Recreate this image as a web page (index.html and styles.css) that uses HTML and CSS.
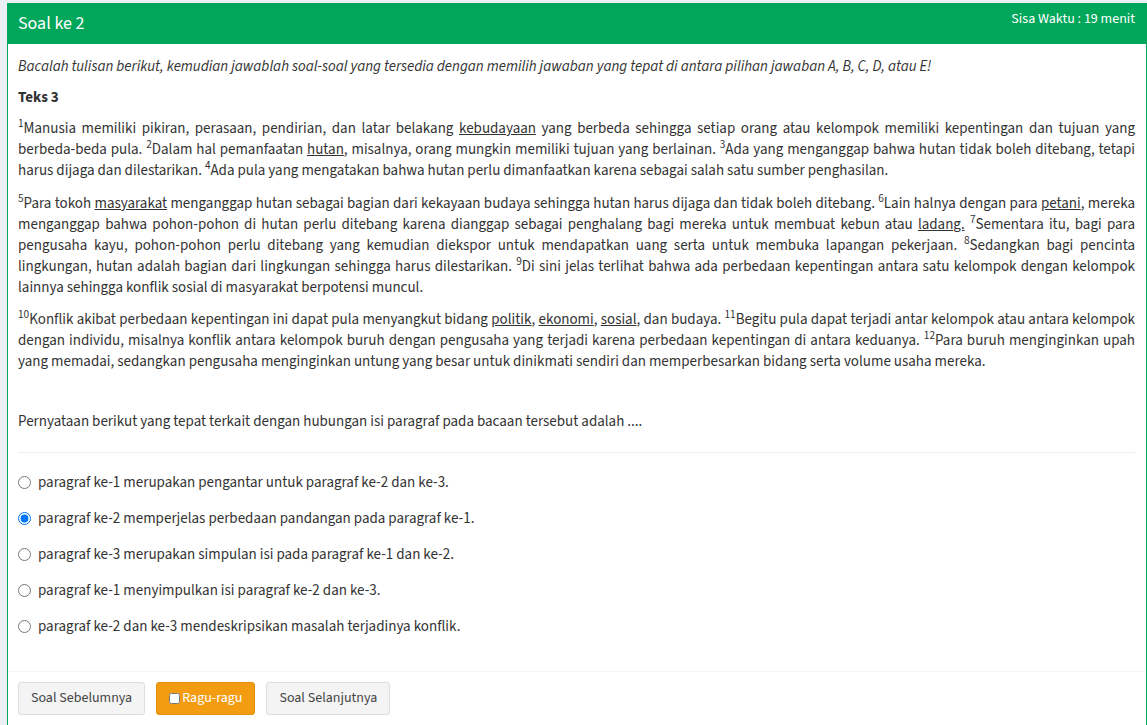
FILE: index.html
```html
<!DOCTYPE html>
<html lang="id">
<head>
<meta charset="utf-8">
<title>Soal ke 2</title>
<link rel="stylesheet" href="styles.css">
</head>
<body>
<div class="page">
  <div class="box">
    <div class="box-header">
      <h3 class="box-title">Soal ke 2</h3>
      <div class="timer">Sisa Waktu : 19 menit</div>
    </div>
    <div class="box-body">
      <p class="instruction">Bacalah tulisan berikut, kemudian jawablah soal-soal yang tersedia dengan memilih jawaban yang tepat di antara pilihan jawaban A, B, C, D, atau E!</p>
      <p class="title">Teks 3</p>
      <p class="para para-first"><sup>1</sup>Manusia memiliki pikiran, perasaan, pendirian, dan latar belakang <u>kebudayaan</u> yang berbeda sehingga setiap orang atau kelompok memiliki kepentingan dan tujuan yang berbeda-beda pula. <sup>2</sup>Dalam hal pemanfaatan <u>hutan</u>, misalnya, orang mungkin memiliki tujuan yang berlainan. <sup>3</sup>Ada yang menganggap bahwa hutan tidak boleh ditebang, tetapi harus dijaga dan dilestarikan. <sup>4</sup>Ada pula yang mengatakan bahwa hutan perlu dimanfaatkan karena sebagai salah satu sumber penghasilan.</p>
      <p class="para para-second"><sup>5</sup>Para tokoh <u>masyarakat</u> menganggap hutan sebagai bagian dari kekayaan budaya sehingga hutan harus dijaga dan tidak boleh ditebang. <sup>6</sup>Lain halnya dengan para <u>petani</u>, mereka menganggap bahwa pohon-pohon di hutan perlu ditebang karena dianggap sebagai penghalang bagi mereka untuk membuat kebun atau <u>ladang.</u> <sup>7</sup>Sementara itu, bagi para pengusaha kayu, pohon-pohon perlu ditebang yang kemudian diekspor untuk mendapatkan uang serta untuk membuka lapangan pekerjaan. <sup>8</sup>Sedangkan bagi pencinta lingkungan, hutan adalah bagian dari lingkungan sehingga harus dilestarikan. <sup>9</sup>Di sini jelas terlihat bahwa ada perbedaan kepentingan antara satu kelompok dengan kelompok lainnya sehingga konflik sosial di masyarakat berpotensi muncul.</p>
      <p class="para"><sup>10</sup>Konflik akibat perbedaan kepentingan ini dapat pula menyangkut bidang <u>politik</u>, <u>ekonomi</u>, <u>sosial</u>, dan budaya. <sup>11</sup>Begitu pula dapat terjadi antar kelompok atau antara kelompok dengan individu, misalnya konflik antara kelompok buruh dengan pengusaha yang terjadi karena perbedaan kepentingan di antara keduanya. <sup>12</sup>Para buruh menginginkan upah yang memadai, sedangkan pengusaha menginginkan untung yang besar untuk dinikmati sendiri dan memperbesarkan bidang serta volume usaha mereka.</p>
      <p class="question">Pernyataan berikut yang tepat terkait dengan hubungan isi paragraf pada bacaan tersebut adalah ....</p>
      <hr class="divider">
      <div class="options">
        <label class="option"><input type="radio" name="jawab"> paragraf ke-1 merupakan pengantar untuk paragraf ke-2 dan ke-3.</label>
        <label class="option"><input type="radio" name="jawab" checked> paragraf ke-2 memperjelas perbedaan pandangan pada paragraf ke-1.</label>
        <label class="option"><input type="radio" name="jawab"> paragraf ke-3 merupakan simpulan isi pada paragraf ke-1 dan ke-2.</label>
        <label class="option"><input type="radio" name="jawab"> paragraf ke-1 menyimpulkan isi paragraf ke-2 dan ke-3.</label>
        <label class="option"><input type="radio" name="jawab"> paragraf ke-2 dan ke-3 mendeskripsikan masalah terjadinya konflik.</label>
      </div>
    </div>
    <div class="box-footer">
      <button class="btn">Soal Sebelumnya</button>
      <button class="btn btn-warning"><input type="checkbox" class="ragu-check">Ragu-ragu</button>
      <button class="btn">Soal Selanjutnya</button>
    </div>
  </div>
</div>
</body>
</html>
```

FILE: styles.css
```css
html, body {
  margin: 0;
  background: #ecf0f5;
}
body {
  font-family: "Source Sans 3", "Source Sans Pro", Lato, sans-serif;
  color: #333;
  font-size: 15px;
}
.page {
  padding: 3px 0 0 7px;
}
.box {
  background: #fff;
  border: 1px solid #00a65a;
  border-top: 0;
}
.box-header {
  background: #00a65a;
  color: #fff;
  height: 41px;
  display: flex;
  justify-content: space-between;
  align-items: flex-start;
  padding: 0 11px 0 10px;
}
.box-title {
  margin: 0;
  font-size: 18px;
  font-weight: normal;
  line-height: 41px;
}
.timer {
  font-size: 14px;
  line-height: 20px;
  padding-top: 6px;
}
.box-body {
  padding: 12px 11px 34px 10px;
}
.box-body p {
  margin: 0 0 10px;
  line-height: 21px;
}
.instruction {
  font-style: italic;
}
.title {
  font-weight: bold;
}
.para {
  text-align: justify;
}
.box-body .para-first {
  margin-bottom: 12px;
}
.box-body .para-second {
  margin-bottom: 11px;
}
sup {
  font-size: 75%;
  line-height: 0;
  position: relative;
  top: -0.5em;
  vertical-align: baseline;
}
.box-body .question {
  margin-top: 39px;
}
.divider {
  border: 0;
  border-top: 1px solid #eee;
  margin: 20px 0 19px;
}
.options {
  display: flex;
  flex-direction: column;
  gap: 15px;
}
.option {
  display: flex;
  align-items: center;
  line-height: 21px;
}
.option input {
  margin: 0 7px 0 0;
  width: 13px;
  height: 13px;
}
.box-footer {
  border-top: 1px solid #f4f4f4;
  padding: 10px;
  display: flex;
  gap: 11px;
  height: 60px;
}
.btn {
  font-family: inherit;
  font-size: 14px;
  line-height: 19px;
  padding: 6px 12px;
  border: 1px solid #ddd;
  border-radius: 3px;
  background: #f4f4f4;
  color: #444;
  height: 33px;
  display: flex;
  align-items: center;
}
.btn-warning {
  background: #f39c12;
  border-color: #e08e0b;
  color: #fff;
}
.ragu-check {
  width: 11px;
  height: 11px;
  margin: 0 2px 0 0;
}
```
